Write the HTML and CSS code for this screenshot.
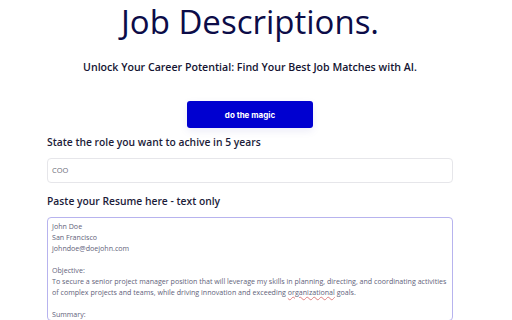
FILE: index.html
```html
<!DOCTYPE html>
<html lang="en">
<head>
<meta charset="utf-8">
<link rel="stylesheet" href="styles.css">
</head>
<body>
<main class="page">
  <h1 class="title">Job Descriptions.</h1>
  <p class="subtitle">Unlock Your Career Potential: Find Your Best Job Matches with AI.</p>
  <div class="actions"><button class="magic">do the magic</button></div>
  <label class="label">State the role you want to achive in 5 years</label>
  <div class="input">COO</div>
  <label class="label label-resume">Paste your Resume here - text only</label>
  <div class="textarea">John Doe
San Francisco
johndoe@doejohn.com

Objective:
To secure a senior project manager position that will leverage my skills in planning, directing, and coordinating activities of complex projects and teams, while driving innovation and exceeding <span class="spell">organizational</span> goals.

Summary:
Experienced project manager with over 10 years of experience.</div>
</main>
</body>
</html>
```
FILE: styles.css
```css
html, body { margin: 0; padding: 0; background: #fff; }
body { font-family: "Open Sans", "Noto Sans", sans-serif; color: #1c1c3c; overflow: hidden; height: 320px; }
.page { width: 406px; margin-left: 47px; display: flex; flex-direction: column; }
.title { margin: 0; font-weight: 400; font-size: 33px; line-height: 44px; text-align: center; color: #0c0c48; }
.subtitle { margin: 15px 0 0; font-size: 10.6px; font-weight: 600; line-height: 16px; text-align: center; color: #141432; }
.actions { display: flex; justify-content: center; margin-top: 26px; }
.magic { width: 126px; height: 27px; border: none; border-radius: 3px; background: #0000d0; color: #fff; font-family: "Inter", "Open Sans", sans-serif; font-weight: 700; font-size: 8px; box-shadow: 0 3px 8px rgba(0,0,160,0.08); }
.label { display: block; margin-top: 7px; font-size: 10.3px; font-weight: 600; line-height: 14px; color: #1c1c3a; }
.input { margin-top: 9px; height: 25px; box-sizing: border-box; border: 1px solid #e6e6ea; border-radius: 4px; padding: 0 4px; font-size: 7.5px; line-height: 23px; color: #6b6b78; }
.label-resume { margin-top: 11px; }
.textarea { margin-top: 9px; box-sizing: border-box; height: 104px; overflow: hidden; border: 1px solid #b7b3ee; border-radius: 4px; padding: 3px 4px; font-size: 7.1px; line-height: 11px; color: #62627a; white-space: pre-wrap; }
.spell { text-decoration: underline wavy #e08080; text-decoration-thickness: 0.5px; }
```
